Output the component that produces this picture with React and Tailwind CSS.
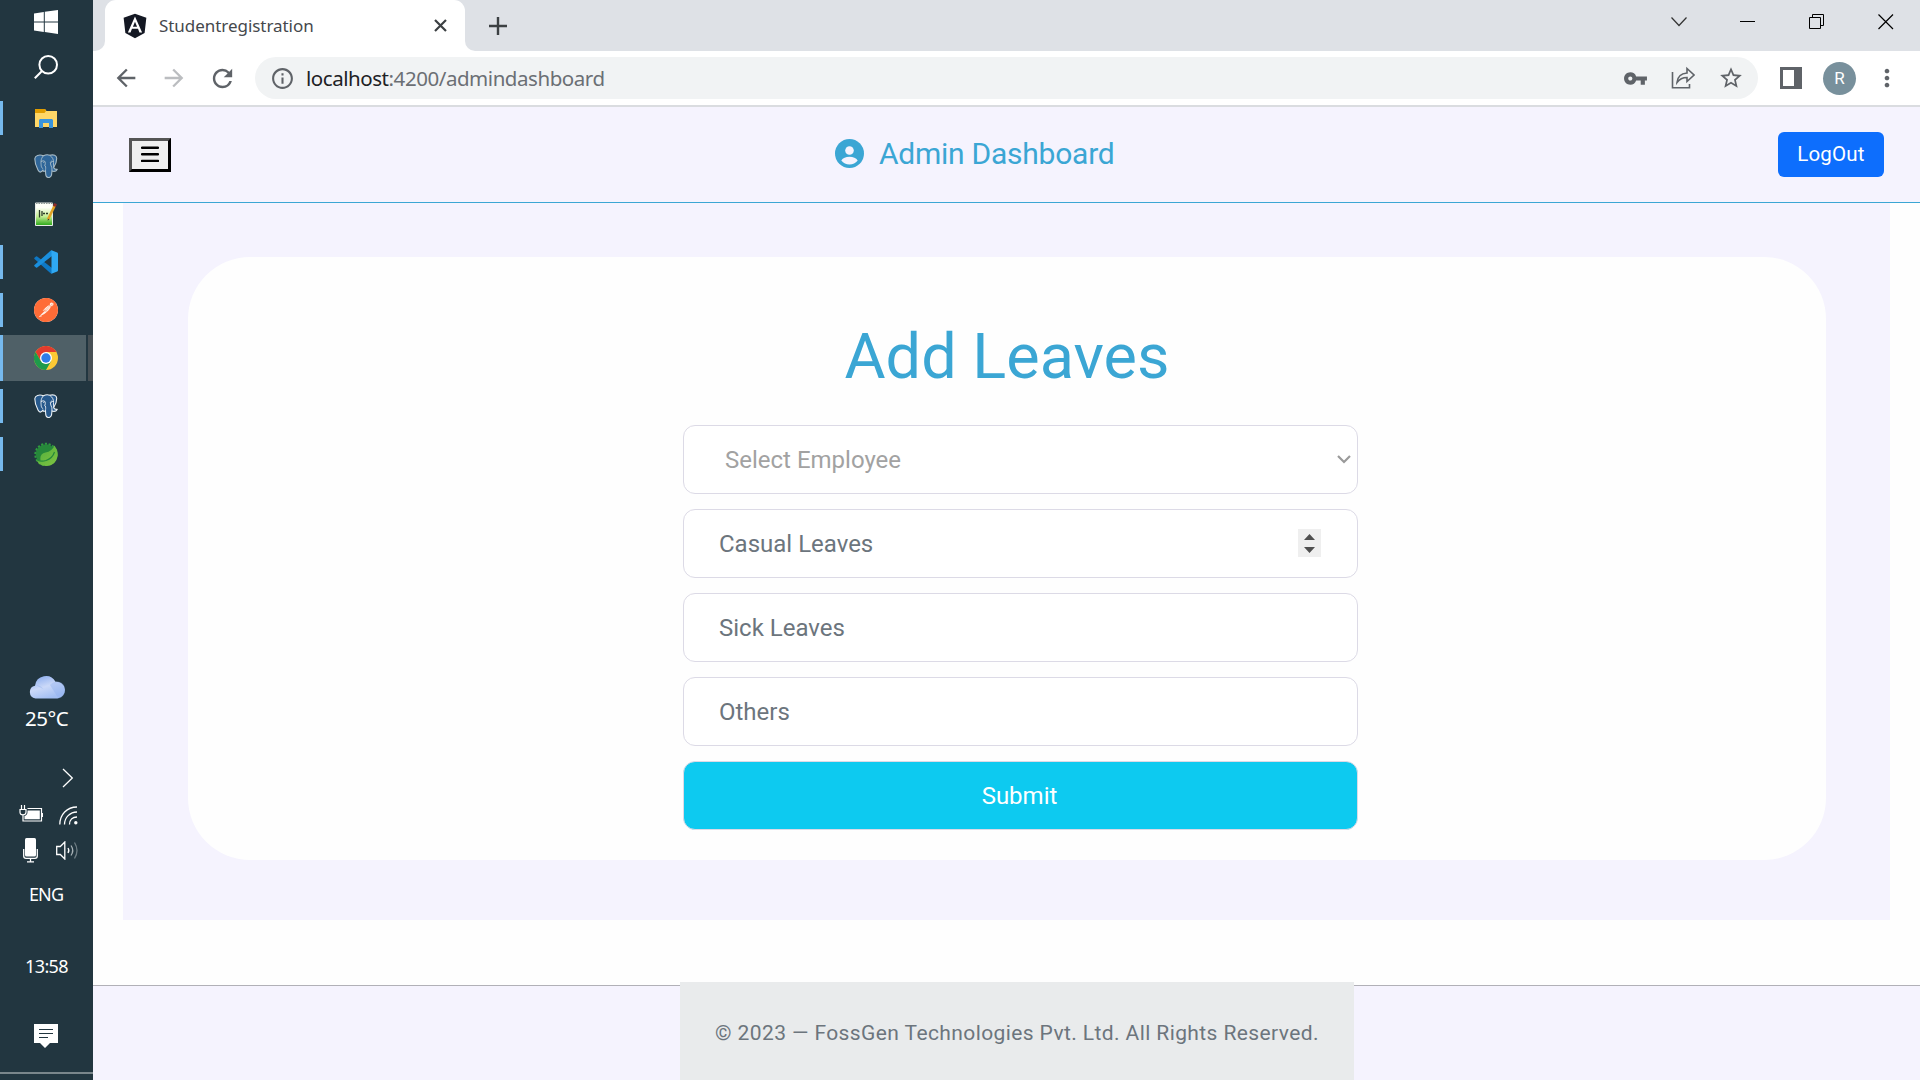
import React from "react";
import {
  MdArrowBack,
  MdArrowForward,
  MdRefresh,
  MdInfoOutline,
  MdVpnKey,
  MdStarBorder,
  MdMoreVert,
} from "react-icons/md";
import { FaAngular } from "react-icons/fa";
import { SiPostgresql, SiPostman } from "react-icons/si";

const sans = "font-['Noto_Sans','Open_Sans',sans-serif]";

function WindowsLogo() {
  return (
    <svg width="24" height="24" viewBox="0 0 24 24" fill="#fff">
      <path d="M0 3.4 9.8 2v9.5H0zM10.8 1.8 24 0v11.5H10.8zM0 12.5h9.8V22L0 20.6zM10.8 12.5H24V24l-13.2-1.9z" />
    </svg>
  );
}

function SearchIcon() {
  return (
    <svg width="24" height="24" viewBox="0 0 24 24" fill="none" stroke="#fff" strokeWidth="2">
      <circle cx="14.2" cy="9.8" r="8.8" />
      <path d="M8 16 .8 23.2" />
    </svg>
  );
}

function FolderIcon() {
  return (
    <svg className="ml-px" width="22" height="19" viewBox="0 0 22 19">
      <path d="M0 0h10l1.5 2H22v16H0z" fill="#ffd767" />
      <path d="M0 0h10l1 2-1.500 2H0z" fill="#e19d00" />
      <path d="M4 19v-8l1-1h12l1 1v8h-4v-5H8v5z" fill="#3a94dc" />
    </svg>
  );
}

function Elephant({ tone, line }) {
  return (
    <svg width="24" height="24" viewBox="0 0 24 24" fill="none" stroke={line} strokeWidth="1.100" strokeLinejoin="round">
      <path
        d="M9 16.200C7 18.500 5.500 19 4 16 2 12.500.8 8 .8 4.800 1 1.500 5 .2 9.500 1.700 12 .4 14 .4 15.800 1.300 19.500.2 22.800 1.500 22.700 4.500c0 3-1.400 6.500-3 9 .2 1.500 1.500 2 3.500 1.900-1 1.800-3.500 2.200-5.300 1.600-.2 3 .2 6.300-2.900 6.500-3.400.2-3.300-2.500-3.500-6.500-1 .4-2.200.3-3-.3z"
        fill={tone}
      />
      <path d="M9.500 1.700C6.300 5 7 9 7.200 11.500c.1 1.700 1 2.800 1.900 3.300M15.800 1.300c2.700 2 4 4.500 3.700 7-.3 2.200.2 3.700.2 5.200M11.500 17c0-2 .5-3.500-.2-5M7 7.500q2.500-1.500 4 0 .8 2-.3 4.500M19.500 7.500q-2.500-1-3.200.8.2 2.700 1.600 5.500l.1 3.200" strokeWidth="0.900" />
      <path d="M9.200 8.300h.9M17 8.200h.8" strokeWidth="1" />
    </svg>
  );
}

function NotepadIcon() {
  return (
    <svg width="24" height="24" viewBox="0 0 24 24">
      <defs>
        <linearGradient id="sheet" x1="0" y1="0" x2="0" y2="1">
          <stop offset="0.2" stopColor="#fdfff8" />
          <stop offset="0.6" stopColor="#c4ee92" />
          <stop offset="1" stopColor="#27a516" />
        </linearGradient>
      </defs>
      <path d="M1.500 1h17v22.500h-17z" fill="url(#sheet)" stroke="#e8ebe6" />
      <path d="M2 1.500h17" stroke="#8e9a97" strokeDasharray="1.500 1" />
      <path d="M5.500 8v7.500M8 9v5M9 11.500h2M12 11.500h2" stroke="#2c3a28" strokeWidth="1.300" />
      <path d="M14 17.500 21 3" stroke="#e2a326" strokeWidth="2.600" />
      <path d="m20.300 4.300 1.300-2.600" stroke="#8e2d2a" strokeWidth="3" />
      <path d="m13.600 18.800.4-2 1.400.8z" fill="#333" />
    </svg>
  );
}

function CodeIcon() {
  return (
    <svg width="24" height="24" viewBox="0 0 24 24">
      <path d="M.5 7.700 2 6.400q.6-.4 1.200 0L18 18v5.800l-1.500-.6L.5 8.900q-.6-.6 0-1.200z" fill="#0e78c4" />
      <path d="M.5 16.300 2 17.600q.6.4 1.200 0L18 6V.2l-1.500.6L.5 15.100q-.6.600 0 1.200z" fill="#1a8fdd" />
      <path d="M17.500.2 23.200 2.500q.8.4.8 1.200v16.600q0 .8-.8 1.200L17.500 23.800z" fill="#2fa8f2" />
    </svg>
  );
}

function PostmanIcon() {
  return (
    <span className="flex h-6 w-6 items-center justify-center rounded-full bg-[#fff1e8]">
      <SiPostman size={24} color="#ff6c37" />
    </span>
  );
}

function ChromeIcon() {
  return (
    <svg width="24" height="24" viewBox="0 0 24 24">
      <circle cx="12" cy="12" r="12" fill="#fcc934" />
      <path d="M1.600 6A12 12 0 0 1 22.400 6H12v6l-5.200 3z" fill="#e33b2e" />
      <path d="M1.600 6 6.800 15 12 18l5.200-3L12 24A12 12 0 0 1 1.600 6z" fill="#1e9a4b" />
      <circle cx="12" cy="12" r="6" fill="#fff" />
      <circle cx="12" cy="12" r="4.700" fill="#2f7de9" />
    </svg>
  );
}

function SpringIcon() {
  return (
    <svg width="24" height="24" viewBox="0 0 24 24">
      <defs>
        <linearGradient id="leaf" x1="0" y1="0" x2="1" y2="1">
          <stop offset="0" stopColor="#4fae3c" />
          <stop offset="1" stopColor="#80c342" />
        </linearGradient>
      </defs>
      <circle cx="12" cy="12.500" r="10.200" fill="#26883a" />
      <circle cx="12" cy="12.500" r="10.800" fill="none" stroke="#2f9a3f" strokeWidth="1.800" strokeDasharray="2.200 1.600" />
      <path d="M20.500 3.500q3.500 4.500 3.200 9.500-.7 7-6 9.700-6.700 2.800-12.500-.7l-3-4q1.800 1 4.500.8Q5 12 11.500 10.500 18 9.500 20.500 3.500z" fill="url(#leaf)" />
      <path d="M3.500 18.200q4 1.600 8.500.3 6.500-2.200 8.500-8.500" stroke="#26883a" strokeWidth="1.200" fill="none" />
    </svg>
  );
}

const taskbar = [
  { icon: <FolderIcon />, open: true },
  { icon: <Elephant tone="#2f6699" line="#a9bdc8" /> },
  { icon: <NotepadIcon /> },
  { icon: <CodeIcon />, open: true },
  { icon: <PostmanIcon />, open: true },
  { icon: <ChromeIcon />, active: true },
  { icon: <Elephant tone="#27598c" line="#eef3f6" />, open: true },
  { icon: <SpringIcon />, open: true },
];

function TaskItem({ icon, open, active }) {
  if (active) {
    return (
      <div className="flex h-[46px] w-full items-stretch">
        <div className="w-[3px] bg-[#76b9ed]" />
        <div className="flex w-[83px] items-center bg-[#4f6067] pl-[31px]">{icon}</div>
        <div className="ml-[2px] flex-1 bg-[#475055]" />
      </div>
    );
  }
  return (
    <div className="flex h-[46px] w-full items-center">
      <div className={open ? "h-[34px] w-[3px] bg-[#76b9ed]" : "h-[34px] w-[3px]"} />
      <div className="flex w-[86px] justify-start pl-[31px]">{icon}</div>
    </div>
  );
}

function Cloud() {
  return (
    <svg width="36" height="24" viewBox="0 0 36 24">
      <defs>
        <linearGradient id="cloud" x1="0" y1="0" x2="0.500" y2="1">
          <stop offset="0" stopColor="#7fa4ec" />
          <stop offset="0.550" stopColor="#cbd9f8" />
          <stop offset="1" stopColor="#a3bff3" />
        </linearGradient>
      </defs>
      <path d="M6.500 23.500a6.500 6.500 0 0 1-.5-12.800A11 11 0 0 1 26.500 6.800a8.400 8.400 0 0 1 2 16.700z" fill="url(#cloud)" />
      <path d="M7 10.300q5 0 7.500 4M21 10q3-3.500 8-3.500 7 1 7 8.500-.5 7-6.500 8.500" fill="#8eafee" fillOpacity="0.400" />
    </svg>
  );
}

function Tray() {
  return (
    <div className="flex flex-col">
      <svg className="ml-[62px]" width="12" height="20" viewBox="0 0 12 20" fill="none" stroke="#fff" strokeWidth="1.300">
        <path d="m1 1 9.300 9L1 19" />
      </svg>
      <div className="mt-[15px] flex h-[20px] items-end pl-[19px]">
        <svg width="24" height="18" viewBox="0 0 24 18" fill="none" stroke="#fff" strokeWidth="1.200">
          <path d="M1 4.500h6v2.800q0 2.500-3 2.500t-3-2.500zM2.500 4.500V0M5.500 4.500V0M4 9.800V16h18.500V3.500H8.500" />
          <path d="M8.500 5.500h12.300v8.800H5.500V11q3-1 3-4z" fill="#fff" stroke="none" />
          <path d="M23.500 8v4" />
        </svg>
        <svg className="mb-[-2px] ml-[16px]" width="19" height="19" viewBox="0 0 19 19" fill="none" stroke="#fff" strokeWidth="1.300">
          <path d="M.8 18.500C.8 8.500 8 1 18 1M5.500 18.500C5.500 11.500 11 6 18 6M10.500 18.500c0-4.500 3-7.500 7.500-7.500" />
          <circle cx="16.800" cy="16.800" r="1.700" fill="#fff" stroke="none" />
        </svg>
      </div>
      <div className="mt-[15px] flex h-[25px] items-center pl-[23px]">
        <svg width="15" height="25" viewBox="0 0 15 25" fill="none" stroke="#fff" strokeWidth="1.300">
          <rect x="2" y="0" width="11" height="18.500" rx="1.500" fill="#fff" stroke="none" />
          <path d="M.7 11v7q0 2.300 2.300 2.300h9q2.300 0 2.300-2.300v-7M7.500 20.300v3.500M4 23.800h7" />
        </svg>
        <svg className="ml-[18px]" width="23" height="19" viewBox="0 0 23 19" fill="none" stroke="#fff" strokeWidth="1.300">
          <path d="M.7 5.500h3.600L8.800 1v17l-4.500-4.500H.7z" />
          <path d="M12 7q1.700 2.500 0 5" />
          <path d="M15 4.500q3.500 5 0 10" stroke="#a7b1b5" />
          <path d="M18.500 1.500q5 8 0 16" stroke="#6e7d84" />
        </svg>
      </div>
    </div>
  );
}

function Sidebar() {
  return (
    <aside className={`flex h-full w-[93px] shrink-0 flex-col bg-[#223640] text-white ${sans}`}>
      <div className="mt-[10px] pl-[34px]">
        <WindowsLogo />
      </div>
      <div className="mt-[21px] pl-[34px]">
        <SearchIcon />
      </div>
      <nav className="mt-4 flex flex-col gap-[2px]">
        {taskbar.map((item, i) => (
          <TaskItem key={i} {...item} />
        ))}
      </nav>
      <div className="mt-[198px] pl-[29px]">
        <Cloud />
      </div>
      <div className="mt-[5px] pl-[25px] text-[20.5px] leading-[28px] tracking-[-0.5px]">25°C</div>
      <div className="mt-[36px]">
        <Tray />
      </div>
      <div className="mt-[19px] pl-[29px] text-[18px] leading-[24px] tracking-[-0.9px]">ENG</div>
      <div className="mt-[48px] pl-[25px] text-[18px] leading-[24px] tracking-[-0.6px]">13:58</div>
      <svg className="mt-[46px] ml-[34px]" width="24" height="24" viewBox="0 0 24 24">
        <path d="M0 0h24v19h-8l-5 5-5-5H0z" fill="#fff" />
        <path d="M5 5.500h14M5 9.500h14M5 13.500h9" stroke="#223640" strokeWidth="1.200" />
      </svg>
      <div className="mt-[24px] h-[2px] bg-[#7a868b]" />
    </aside>
  );
}

function TabStrip() {
  return (
    <div className="flex h-[51px] bg-[#dee1e6]">
      <div className="flex w-3 items-end bg-white">
        <div className="h-full w-full rounded-br-[10px] bg-[#dee1e6]" />
      </div>
      <div className="w-[360px] bg-[#dee1e6]">
        <div className="flex h-full items-center rounded-t-[11px] bg-white pl-[18px]">
          <FaAngular className="-ml-[2px] shrink-0" size={28} color="#141823" />
          <span className={`ml-[10px] w-[275px] text-[17px] tracking-[-0.05px] text-[#45484c] ${sans}`}>
            Studentregistration
          </span>
          <svg className="shrink-0" width="13" height="13" viewBox="0 0 13 13" stroke="#3c4043" strokeWidth="2.200">
            <path d="m1 1 11 11M12 1 1 12" />
          </svg>
        </div>
      </div>
      <div className="flex w-3 bg-white">
        <div className="h-full w-full rounded-bl-[10px] bg-[#dee1e6]" />
      </div>
      <svg className="mt-[17px] ml-[12px]" width="18" height="18" viewBox="0 0 18 18" stroke="#3c4043" strokeWidth="2.400">
        <path d="M9 0v18M0 9h18" />
      </svg>
      <div className="mt-[14px] mr-[26px] ml-auto flex h-4 gap-[53px]">
        <svg width="16" height="16" viewBox="0 0 16 16" fill="none" stroke="#333" strokeWidth="1.200">
          <path d="m.5 3.500 7.500 8 7.500-8" />
        </svg>
        <svg width="16" height="16" viewBox="0 0 16 16" stroke="#000" strokeWidth="1">
          <path d="M0 7.500h15" />
        </svg>
        <svg width="16" height="16" viewBox="0 0 16 16" fill="none" stroke="#000" strokeWidth="1">
          <path d="M.5 3.500h11v11H.5zM3.500 3.500v-3h11v11h-3" />
        </svg>
        <svg width="16" height="16" viewBox="0 0 16 16" stroke="#000" strokeWidth="1.200">
          <path d="m.5.500 14.500 14.500M15 .500l-14.500 14.500" />
        </svg>
      </div>
    </div>
  );
}

function Toolbar() {
  return (
    <div className="flex h-[56px] items-center border-b-2 border-[#dadce0] bg-white pl-[19px]">
      <MdArrowBack size={28} color="#5f6368" />
      <MdArrowForward className="ml-5" size={28} color="#bbbdc0" />
      <MdRefresh className="ml-5" size={29} color="#5f6368" />
      <div className="ml-[18px] flex h-[42px] w-[1503px] items-center rounded-full bg-[#f1f3f4] pl-[15px]">
        <MdInfoOutline size={25} color="#5f6368" />
        <span className={`ml-[11px] pt-px text-[20.5px] tracking-[-0.45px] text-[#202124] ${sans}`}>
          localhost<span className="text-[#6b6f74]">:4200/admindashboard</span>
        </span>
        <div className="mr-[14px] ml-auto flex items-center gap-[23px]">
          <MdVpnKey size={25} color="#5f6368" />
          <svg width="24" height="24" viewBox="0 0 24 24" fill="none" stroke="#5f6368" strokeWidth="1.600">
            <path d="M1.500 6v15.700H18.500V18" />
            <path d="M6 16.500C6.500 10.500 10 7.500 16 7V2.500L23 9l-7 6.500V11.500c-4.500 0-7.500 1.500-10 5z" />
          </svg>
          <MdStarBorder size={26} color="#5f6368" />
        </div>
      </div>
      <svg className="ml-[22px]" width="22" height="22" viewBox="0 0 22 22">
        <path d="M0 0h22v22H0z" fill="#5f6368" />
        <path d="M3 3h11v16H3z" fill="#fff" />
      </svg>
      <div className="ml-[21px] flex h-[33px] w-[33px] items-center justify-center rounded-full bg-[#78909c] pt-[2px] font-['Roboto',sans-serif] text-[17px] text-white">
        R
      </div>
      <MdMoreVert className="ml-[17px]" size={28} color="#5f6368" />
    </div>
  );
}

function Navbar() {
  return (
    <header className="flex h-[96px] items-center border-b border-[#3ba6d4] bg-[#f5f3fe] pr-9 pl-9">
      <button className="flex h-[34px] w-[42px] items-center justify-center border-[3px] border-t-[#555] border-r-black border-b-black border-l-[#555] bg-[#efefef]">
        <svg width="18" height="17" viewBox="0 0 18 17" stroke="#000" strokeWidth="2.400" strokeLinecap="round">
          <path d="M1 1.700h16M1 8.300h16M1 14.900h16" />
        </svg>
      </button>
      <div className="ml-[664px] flex items-center text-[#3ba6d4]">
        <svg className="-mt-[3px]" width="29" height="29" viewBox="0 0 29 29">
          <circle cx="14.500" cy="14.500" r="14.500" fill="currentColor" />
          <circle cx="14.500" cy="11.500" r="4.300" fill="#f5f3fe" />
          <path d="M6.300 21.500q2.500-3.700 8.200-3.700t8.200 3.700q-3.200 4-8.200 4t-8.200-4z" fill="#f5f3fe" />
        </svg>
        <h1 className="-mt-[2px] ml-[15px] text-[30px] leading-[36px] tracking-[-0.25px]">Admin Dashboard</h1>
      </div>
      <button className="ml-auto h-[45px] w-[106px] rounded-[6px] bg-[#0d6efd] text-[20.5px] tracking-[0.2px] text-white">
        LogOut
      </button>
    </header>
  );
}

const fieldBox = "flex h-[69px] w-full items-center rounded-[12px] border border-[#dcdae6] bg-white";

function Field({ label, spinner }) {
  return (
    <div className={`${fieldBox} justify-between pr-9 pl-[35px] text-[#6c757d]`}>
      <span>{label}</span>
      {spinner && (
        <span className="-mt-px flex h-[28px] w-[23px] items-center justify-center bg-[#efefef]">
          <svg width="11" height="19" viewBox="0 0 11 19" fill="#4f4f4f">
            <path d="M0 6 5.500 0 11 6zM0 13h11l-5.500 6z" />
          </svg>
        </span>
      )}
    </div>
  );
}

function LeaveForm() {
  return (
    <section className="ml-[65px] h-[603px] w-[1638px] rounded-[62px] bg-[#fefefe] pt-[61px]">
      <h2 className="text-center text-[63px] leading-[78px] text-[#3ba6d4]">Add Leaves</h2>
      <form className="mt-[29px] ml-[495px] flex w-[675px] flex-col gap-[15px] text-[24px]">
        <div className={`${fieldBox} justify-between pr-[6px] pl-[41px] text-[#a2a2a2]`}>
          <span>Select Employee</span>
          <svg width="14" height="9" viewBox="0 0 14 9" fill="none" stroke="#9a9a9a" strokeWidth="2.200">
            <path d="m1 1 6 6 6-6" />
          </svg>
        </div>
        <Field label="Casual Leaves" spinner />
        <Field label="Sick Leaves" />
        <Field label="Others" />
        <button type="button" className="h-[69px] w-full rounded-[12px] border border-[#dcdae6] bg-[#0dcaf0] pr-[2px] text-white">
          Submit
        </button>
      </form>
    </section>
  );
}

export default function App() {
  return (
    <div className="flex h-[1080px] w-[1920px] overflow-hidden bg-white">
      <Sidebar />
      <div className="flex min-w-0 flex-1 flex-col">
        <TabStrip />
        <Toolbar />
        <div className="flex flex-1 flex-col bg-[#fefefe] font-['Roboto',sans-serif]">
          <Navbar />
          <main className="mr-[30px] ml-[30px] h-[717px] bg-[#f5f3fe] pt-[54px]">
            <LeaveForm />
          </main>
          <footer className="mt-[65px] h-[95px] border-t border-[#b1b0b7] bg-[#f5f3fe]">
            <div className="-mt-[4px] ml-[587px] flex h-[99px] w-[674px] items-center justify-center bg-[#e9ebec] pb-px pt-[6px] text-[21px] tracking-[0.4px] whitespace-nowrap text-[#6c757d]">
              © 2023 — FossGen Technologies Pvt. Ltd. All Rights Reserved.
            </div>
          </footer>
        </div>
      </div>
    </div>
  );
}
